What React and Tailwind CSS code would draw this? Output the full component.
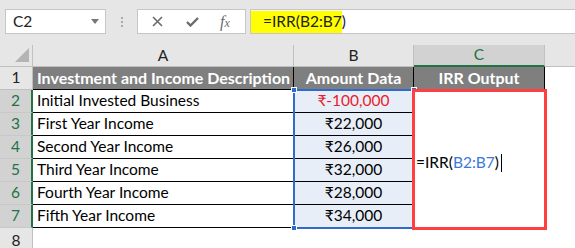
import React from "react";

const rows = [
  ["Initial Invested Business", "₹-100,000", true],
  ["First Year Income", "₹22,000"],
  ["Second Year Income", "₹26,000"],
  ["Third Year Income", "₹32,000"],
  ["Fourth Year Income", "₹28,000"],
  ["Fifth Year Income", "₹34,000"],
];

function Handle({ className }) {
  return <div className={"absolute w-[6px] h-[6px] bg-[#2f6bcb] border border-white " + className} />;
}

export default function App() {
  return (
    <div className="w-[575px] h-[248px] overflow-hidden bg-white text-black relative" style={{ fontFamily: "Lato, 'Noto Sans', sans-serif" }}>
      {/* Formula toolbar */}
      <div className="h-[45px] bg-[#e6e6e6] flex items-start pt-[9px]">
        <div className="ml-[5px] w-[101px] h-[25px] bg-white border border-[#c6c6c6] flex items-center justify-between pl-[7px] pr-[6px]">
          <span className="text-[15.5px] text-[#222]">C2</span>
          <svg width="8" height="5" viewBox="0 0 8 5"><path d="M0 0H8L4 5Z" fill="#777" /></svg>
        </div>
        <div className="w-[31px] h-[25px] flex flex-col items-center justify-center gap-[2px]">
          <div className="w-[2px] h-[2px] bg-[#aaa]" />
          <div className="w-[2px] h-[2px] bg-[#aaa]" />
          <div className="w-[2px] h-[2px] bg-[#aaa]" />
        </div>
        <div className="w-[109px] h-[25px] bg-white border border-[#c6c6c6] flex items-center">
          <svg className="ml-[14px]" width="11" height="11" viewBox="0 0 11 11"><path d="M1 1L10 10M10 1L1 10" stroke="#6b6b6b" strokeWidth="1.6" /></svg>
          <svg className="ml-[23px]" width="13" height="10" viewBox="0 0 13 10"><path d="M1 5L4.5 8.5L12 1" stroke="#6b6b6b" strokeWidth="2.4" fill="none" /></svg>
          <span className="ml-[21px] text-[16px] italic text-[#6b6b6b]" style={{ fontFamily: "'Liberation Serif', serif" }}>f<span className="text-[12px]">x</span></span>
        </div>
        <div className="ml-[4px] flex-1 h-[25px] bg-white border-y border-l border-[#c6c6c6] flex items-center">
          <div className="w-[91px] h-[22px] bg-[#ffff00] flex items-center pl-[12px] text-[15.5px] text-[#222]">=IRR(B2:B7)</div>
        </div>
      </div>

      {/* Sheet */}
      <div className="relative grid grid-cols-[33px_261px_120px_131px_1fr] grid-rows-[22px_repeat(7,23px)_1fr] h-[203px] text-[15.5px]">
        {/* header row */}
        <div className="bg-[#e6e6e6] border-r border-b border-[#c0c0c0] relative">
          <svg className="absolute right-[3px] bottom-[4px]" width="14" height="14" viewBox="0 0 14 14"><path d="M14 0V14H0Z" fill="#b4b4b4" /></svg>
        </div>
        <div className="bg-[#e6e6e6] border-r border-b border-[#c0c0c0] flex items-center justify-center text-[#222]">A</div>
        <div className="bg-[#e6e6e6] border-r border-b border-[#c0c0c0] flex items-center justify-center text-[#222]">B</div>
        <div className="bg-[#d2d2d2] border-r border-[#c0c0c0] border-b-2 border-b-[#217346] flex items-center justify-center text-[#217346]">C</div>
        <div className="bg-[#e6e6e6] border-b border-[#c0c0c0]" />

        {/* row 1 */}
        <div className="bg-[#e6e6e6] border-r border-b border-[#c0c0c0] flex items-center justify-center text-[#222]">1</div>
        <div className="bg-[#7f7f7f] border-r border-b border-black flex items-center pl-[4px] text-white font-bold text-[16px] whitespace-nowrap">Investment and Income Description</div>
        <div className="bg-[#7f7f7f] border-r border-b border-black flex items-center justify-center text-white font-bold text-[16px]">Amount Data</div>
        <div className="bg-[#7f7f7f] border-r border-b border-black flex items-center justify-center text-white font-bold text-[16px]">IRR Output</div>
        <div className="bg-white" />

        {rows.map(([label, amt, neg], i) => (
          <React.Fragment key={i}>
            <div className="bg-[#d2d2d2] border-r-2 border-r-[#217346] border-b border-b-[#c8c8c8] flex items-center justify-center text-[#217346]">{i + 2}</div>
            <div className="bg-white border-r border-b border-black flex items-center pl-[4px] whitespace-nowrap">{label}</div>
            <div className={"bg-[#e8eef8] border-r border-b border-black flex items-center justify-center " + (neg ? "text-[#e8202a]" : "text-black")}>{amt}</div>
            <div className="bg-white" />
            <div className="bg-white" />
          </React.Fragment>
        ))}

        {/* row 8 */}
        <div className="bg-[#e6e6e6] border-r border-[#c0c0c0] flex items-start justify-center pt-[1px] text-[#222]">8</div>
        <div className="bg-white" />
        <div className="bg-white" />
        <div className="bg-white" />
        <div className="bg-white" />

        {/* blue selection B2:B7 */}
        <div className="absolute left-[293px] top-[44px] w-[122px] h-[140px] border-2 border-[#2f6bcb] pointer-events-none" />
        <Handle className="left-[291px] top-[42px]" />
        <Handle className="left-[411px] top-[42px]" />
        <Handle className="left-[291px] top-[180px]" />

        {/* red box C2:C7 */}
        <div className="absolute left-[412px] top-[44px] w-[135px] h-[141px] border-[3px] border-[#ff4040] pointer-events-none" />
        <div className="absolute left-[416px] top-[106px] text-[15.5px] whitespace-nowrap flex items-center">
          <span>=IRR(</span><span className="text-[#3b78d8]">B2:B7</span><span>)</span>
          <span className="ml-[2px] w-[1px] h-[18px] bg-black" />
        </div>
      </div>
    </div>
  );
}
